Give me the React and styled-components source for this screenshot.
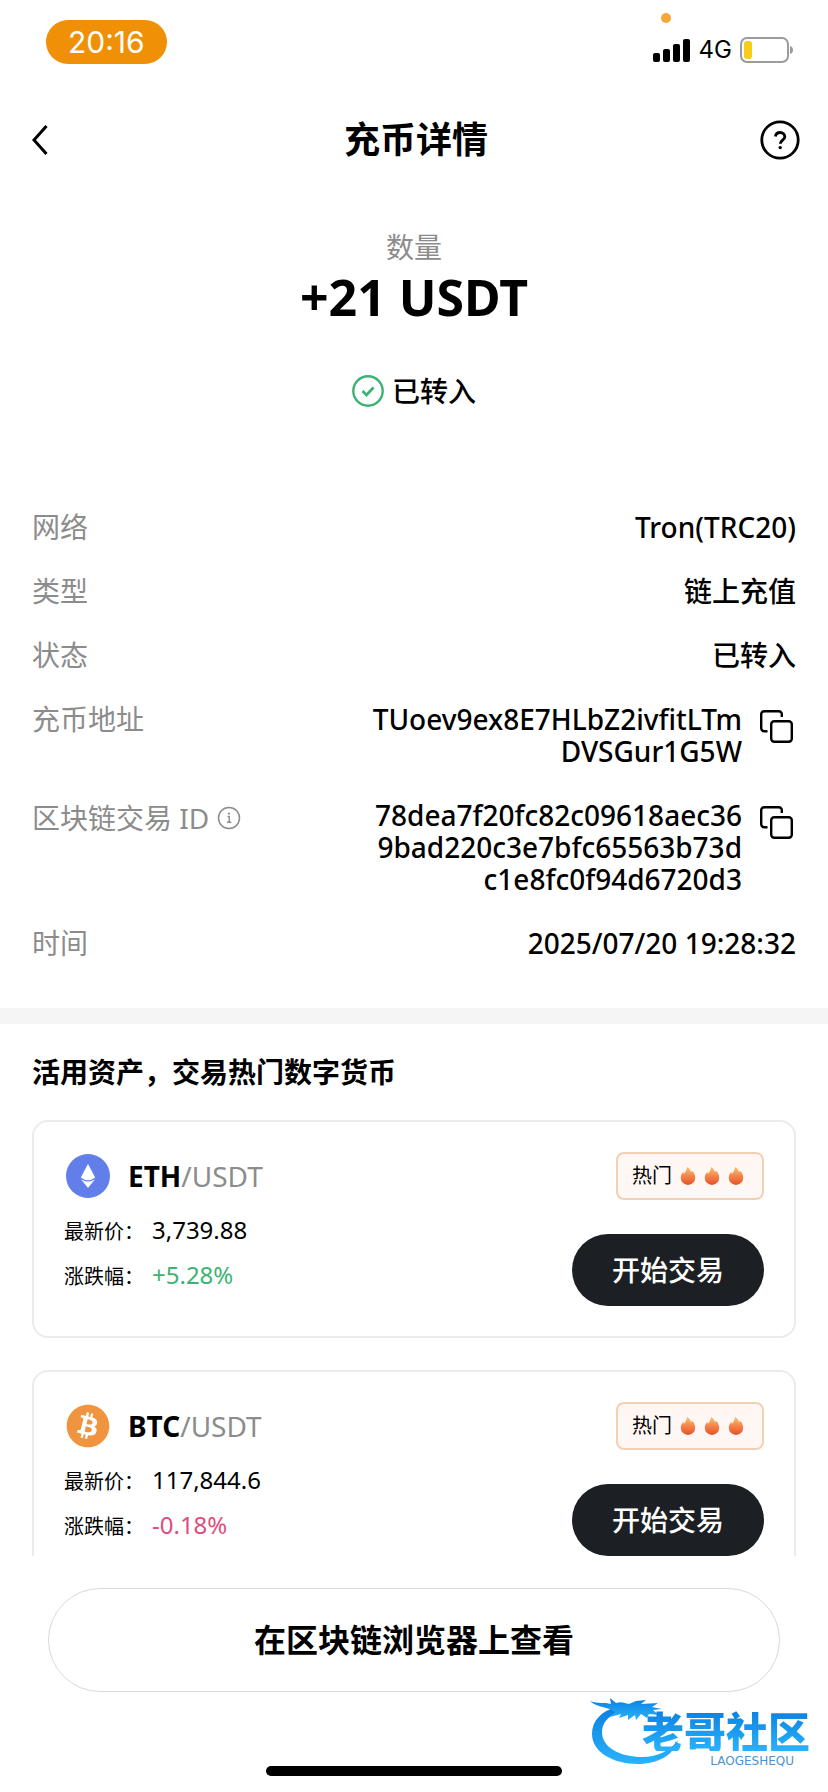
import styled, { createGlobalStyle } from "styled-components";
import { FaBitcoin } from "react-icons/fa";

const details = [
  { label: "网络", value: "Tron(TRC20)" },
  { label: "类型", value: "链上充值" },
  { label: "状态", value: "已转入" },
  {
    label: "充币地址",
    value: "TUoev9ex8E7HLbZ2ivfitLTmDVSGur1G5W",
    copyable: true,
  },
  {
    label: "区块链交易 ID",
    value: "78dea7f20fc82c09618aec369bad220c3e7bfc65563b73dc1e8fc0f94d6720d3",
    copyable: true,
    info: true,
  },
  { label: "时间", value: "2025/07/20 19:28:32" },
];

const markets = [
  { base: "ETH", quote: "USDT", price: "3,739.88", change: "+5.28%", icon: EthIcon },
  { base: "BTC", quote: "USDT", price: "117,844.6", change: "-0.18%", icon: BtcIcon },
];

export default function App() {
  return (
    <Page>
      <GlobalStyle />
      <StatusBar>
        <Clock>20:16</Clock>
        <StatusIcons>
          <RecordingDot />
          <SignalIcon />
          <Carrier>4G</Carrier>
          <BatteryIcon />
        </StatusIcons>
      </StatusBar>
      <Header>
        <IconButton type="button" aria-label="返回">
          <BackIcon />
        </IconButton>
        <Title>充币详情</Title>
        <IconButton type="button" aria-label="帮助">
          <HelpIcon />
        </IconButton>
      </Header>
      <Content>
        <Summary>
          <SummaryLabel>数量</SummaryLabel>
          <Amount>+21 USDT</Amount>
          <Status>
            <CheckIcon />
            已转入
          </Status>
        </Summary>
        <DetailList>
          {details.map((detail) => (
            <DetailRow key={detail.label}>
              <DetailLabel>
                {detail.label}
                {detail.info && (
                  <InfoButton type="button" aria-label="说明">
                    <InfoIcon />
                  </InfoButton>
                )}
              </DetailLabel>
              <DetailValue>
                <DetailText>{detail.value}</DetailText>
                {detail.copyable && (
                  <CopyButton type="button" aria-label="复制">
                    <CopyIcon />
                  </CopyButton>
                )}
              </DetailValue>
            </DetailRow>
          ))}
        </DetailList>
        <Markets>
          <MarketsTitle>活用资产，交易热门数字货币</MarketsTitle>
          {markets.map((market) => (
            <MarketCard key={market.base} {...market} />
          ))}
        </Markets>
      </Content>
      <Footer>
        <ExplorerButton type="button">在区块链浏览器上查看</ExplorerButton>
        <Brand>
          <DragonIcon />
          <BrandName>老哥社区</BrandName>
          <BrandLatin>LAOGESHEQU</BrandLatin>
        </Brand>
        <HomeIndicator />
      </Footer>
    </Page>
  );
}

function MarketCard({ base, quote, price, change, icon: Icon }) {
  return (
    <Card>
      <CardHead>
        <Icon />
        <Pair>
          <strong>{base}</strong>/{quote}
        </Pair>
        <HotBadge>
          热门
          <Flames>
            <FlameIcon />
            <FlameIcon />
            <FlameIcon />
          </Flames>
        </HotBadge>
      </CardHead>
      <CardBody>
        <Stats>
          <Stat>
            <StatLabel>最新价：</StatLabel>
            <StatValue>{price}</StatValue>
          </Stat>
          <Stat>
            <StatLabel>涨跌幅：</StatLabel>
            <StatValue $tone={change.startsWith("+") ? "up" : "down"}>
              {change}
            </StatValue>
          </Stat>
        </Stats>
        <TradeButton type="button">开始交易</TradeButton>
      </CardBody>
    </Card>
  );
}

function SignalIcon() {
  return (
    <svg width="38" height="24" viewBox="0 0 38 24" aria-hidden="true">
      <rect x="0" y="15" width="7" height="9" rx="2" />
      <rect x="10" y="11" width="7" height="13" rx="2" />
      <rect x="20" y="6" width="7" height="18" rx="2" />
      <rect x="30" y="1" width="7" height="23" rx="2" />
    </svg>
  );
}

function BatteryIcon() {
  return (
    <svg width="54" height="26" viewBox="0 0 54 26" aria-hidden="true">
      <rect x="1" y="1" width="47" height="24" rx="6" fill="none" stroke="#9b9b9b" strokeWidth="2" />
      <rect x="4" y="4" width="8" height="18" rx="3" fill="#f5cd1a" />
      <path d="M50 9c4 1 4 7 0 8z" fill="#9b9b9b" />
    </svg>
  );
}

function BackIcon() {
  return (
    <svg width="40" height="40" viewBox="0 0 40 40" aria-hidden="true">
      <path d="M14.5 6 2 20l12.5 14" fill="none" stroke="#000" strokeWidth="3" />
    </svg>
  );
}

function HelpIcon() {
  return (
    <svg width="40" height="40" viewBox="0 0 40 40" fill="none" stroke="#000" aria-hidden="true">
      <circle cx="20" cy="20" r="18.2" strokeWidth="2.8" />
      <path
        d="M15.4 16.4c.4-2.3 2.3-3.9 4.7-3.9 2.7 0 4.7 1.9 4.7 4.3 0 3.2-4.5 3.5-4.5 7"
        strokeWidth="2.8"
      />
      <circle cx="20.2" cy="27.6" r="1.7" fill="#000" stroke="none" />
    </svg>
  );
}

function CheckIcon() {
  return (
    <svg width="32" height="32" viewBox="0 0 32 32" fill="none" stroke="#3cb371" aria-hidden="true">
      <circle cx="16" cy="16" r="14.7" strokeWidth="2.4" />
      <path d="m10.5 16 4 4 7-7.5" strokeWidth="2.8" />
    </svg>
  );
}

function InfoIcon() {
  return (
    <svg width="24" height="24" viewBox="0 0 24 24" fill="none" stroke="#8c8c8c" aria-hidden="true">
      <circle cx="12" cy="12" r="10.5" strokeWidth="1.5" />
      <path d="M10.5 10.5h1.7v5.5M10 16.3h4.3" strokeWidth="1.4" />
      <circle cx="12" cy="7.6" r="1.1" fill="#8c8c8c" stroke="none" />
    </svg>
  );
}

function CopyIcon() {
  return (
    <svg width="40" height="40" viewBox="0 0 40 40" fill="none" stroke="#000" strokeWidth="2.4" aria-hidden="true">
      <rect x="15.2" y="15.2" width="20.6" height="20.6" rx="3" />
      <path d="M11.5 25.2H8.2a3 3 0 0 1-3-3V8.2a3 3 0 0 1 3-3h14.600a3 3 0 0 1 3 3v2.8" />
    </svg>
  );
}

function EthIcon() {
  return (
    <svg width="48" height="48" viewBox="0 0 48 48" aria-hidden="true">
      <circle cx="24" cy="24" r="22" fill="#627eea" />
      <path d="m24 12 7.2 13.5q-7.2 5.5-14.4 0z" fill="#fff" />
      <path d="M17 27.2q7 4.8 14 0l-7 8.8z" fill="#fff" />
    </svg>
  );
}

function BtcIcon() {
  return (
    <CoinFrame>
      <FaBitcoin size={44} aria-hidden="true" />
    </CoinFrame>
  );
}

function FlameIcon() {
  return (
    <svg width="24" height="24" viewBox="0 0 24 24" aria-hidden="true">
      <defs>
        <linearGradient id="flame" x1="0" y1="0" x2="0" y2="1">
          <stop offset="0" stopColor="#f9c56c" />
          <stop offset="0.45" stopColor="#f58a4e" />
          <stop offset="1" stopColor="#e5502a" />
        </linearGradient>
      </defs>
      <path
        d="M11 3c3 1.5 3.5 3.5 4.2 5.3.4-.6.6-1.1.6-1.8 2.2 2 3.4 4.6 3.4 7.2A7.2 7.2 0 0 1 12 21a7.2 7.2 0 0 1-7.2-7.3c0-2.7 1.2-4.2 2.8-5.6 0 .8.2 1.3.6 1.7C9.2 7.8 11 5.8 11 3z"
        fill="url(#flame)"
      />
    </svg>
  );
}

function DragonIcon() {
  return (
    <svg width="96" height="72" viewBox="0 0 96 72" aria-hidden="true">
      <defs>
        <linearGradient id="dragon" x1="0" y1="0" x2="0" y2="1">
          <stop offset="0" stopColor="#0b7fe0" />
          <stop offset="1" stopColor="#29b3fb" />
        </linearGradient>
      </defs>
      <g fill="url(#dragon)">
        <path d="M27 10C11 14 2 24 2 37c0 18 21 30 46 30 20 0 36-9 40-24-8 11-21 17-36 17-21 0-40-9-40-25 0-9 6-16 17-20z" />
        <path d="M0 4c8 3 14 1 21 3l-1-6 6 5c5-2 9 0 13 1l7-3 10-1-5 4 17-1-6 4 10 2-9 1 6 5-10-1-2 4-6-4-5 6-1-5-7 5v-5l-9 3 2-4-11 3 5-5C17 9 7 11 0 4z" />
      </g>
    </svg>
  );
}

const GlobalStyle = createGlobalStyle`
  * {
    box-sizing: border-box;
  }
  body {
    margin: 0;
    background: #fff;
    color: #000;
    font-family: "Noto Sans", "Noto Sans CJK SC", sans-serif;
    font-size: 28px;
    line-height: 32px;
  }
  button {
    border: 0;
    padding: 0;
    background: none;
    color: inherit;
    font: inherit;
  }
  svg {
    display: block;
    flex: none;
  }
`;

const Page = styled.div`
  display: flex;
  flex-direction: column;
  height: 100vh;
`;

const StatusBar = styled.div`
  display: flex;
  justify-content: space-between;
  align-items: flex-start;
  padding: 20px 34px 16px 46px;
`;

const Clock = styled.div`
  padding: 0 22px;
  border-radius: 22px;
  background: #f09006;
  color: #fff;
  font-family: Inter, sans-serif;
  font-size: 30px;
  line-height: 44px;
`;

const StatusIcons = styled.div`
  position: relative;
  display: flex;
  align-items: center;
  gap: 8px;
  padding-top: 14px;
`;

const RecordingDot = styled.span`
  position: absolute;
  top: -7px;
  left: 8px;
  width: 10px;
  height: 10px;
  border-radius: 50%;
  background: #f5a836;
`;

const Carrier = styled.span`
  font-family: Inter, sans-serif;
  font-size: 24px;
`;

const Header = styled.header`
  display: flex;
  align-items: center;
  justify-content: space-between;
  padding: 38px 28px 16px 32px;
`;

const IconButton = styled.button`
  width: 40px;
  height: 40px;
`;

const Title = styled.h1`
  margin: 0;
  font-size: 36px;
  font-weight: 600;
  line-height: 40px;
`;

const Content = styled.main`
  flex: 1;
  min-height: 0;
  overflow-y: auto;
  scrollbar-width: none;
`;

const Summary = styled.section`
  display: flex;
  flex-direction: column;
  align-items: center;
  padding: 55px 32px 104px;
`;

const SummaryLabel = styled.span`
  color: #8c8c8c;
`;

const Amount = styled.strong`
  padding: 2px 0 46px;
  font-size: 50px;
  font-weight: 700;
  line-height: 64px;
`;

const Status = styled.div`
  display: flex;
  align-items: center;
  gap: 8px;
  font-weight: 500;
`;

const DetailList = styled.dl`
  display: flex;
  flex-direction: column;
  gap: 32px;
  margin: 0;
  padding: 0 32px 49px;
`;

const DetailRow = styled.div`
  display: flex;
  align-items: flex-start;
  justify-content: space-between;
`;

const DetailLabel = styled.dt`
  display: flex;
  align-items: center;
  color: #8c8c8c;
`;

const InfoButton = styled.button`
  padding: 7px 8px;
`;

const DetailValue = styled.dd`
  display: flex;
  align-items: flex-start;
  gap: 14px;
  margin: 0;
  font-weight: 500;
  text-align: right;
`;

const DetailText = styled.span`
  max-width: 374px;
  word-break: break-all;
`;

const CopyButton = styled.button`
  padding-top: 3px;
`;

const Markets = styled.section`
  display: flex;
  flex-direction: column;
  gap: 32px;
  padding: 32px;
  border-top: 16px solid #f5f5f5;
`;

const MarketsTitle = styled.h2`
  margin: 0;
  font-size: 28px;
  font-weight: 600;
  line-height: 32px;
`;

const Card = styled.article`
  padding: 30px;
  border: 2px solid #ebebeb;
  border-radius: 16px;
`;

const CardHead = styled.div`
  display: flex;
  align-items: center;
`;

const CoinFrame = styled.span`
  padding: 2px;
  color: #f09440;
`;

const Pair = styled.span`
  flex: 1;
  padding-left: 16px;
  color: #8c8c8c;

  strong {
    color: #000;
  }
`;

const HotBadge = styled.span`
  display: flex;
  align-items: center;
  gap: 4px;
  padding: 0 14px;
  border: 2px solid #f3d0b4;
  border-radius: 8px;
  background: #fff7f3;
  font-size: 20px;
  line-height: 44px;
`;

const Flames = styled.span`
  display: flex;
`;

const CardBody = styled.div`
  display: flex;
  align-items: flex-end;
  justify-content: space-between;
  padding-top: 16px;
`;

const Stats = styled.div`
  display: flex;
  flex-direction: column;
  gap: 15px;
  padding-bottom: 15px;
`;

const Stat = styled.div`
  display: flex;
  align-items: baseline;
  gap: 8px;
  line-height: 28px;
`;

const StatLabel = styled.span`
  font-size: 20px;
`;

const tones = { up: "#3cb371", down: "#dc4d7d" };

const StatValue = styled.span`
  color: ${({ $tone }) => tones[$tone] || "#000"};
  font-size: 24px;
`;

const TradeButton = styled.button`
  width: 192px;
  height: 72px;
  border-radius: 36px;
  background: #1c1f23;
  color: #fff;
  font-weight: 500;
`;

const Footer = styled.footer`
  position: relative;
  display: flex;
  flex-direction: column;
  align-items: center;
  gap: 74px;
  padding: 32px 48px 16px;
`;

const ExplorerButton = styled.button`
  width: 100%;
  height: 104px;
  border: 1px solid #d9d9d9;
  border-radius: 52px;
  font-size: 32px;
  font-weight: 600;
`;

const Brand = styled.div`
  position: absolute;
  right: 18px;
  bottom: 23px;
  width: 220px;
  height: 72px;
`;

const BrandName = styled.span`
  position: absolute;
  right: 0;
  top: 12px;
  background: linear-gradient(#0b7fe0, #29b3fb);
  background-clip: text;
  color: transparent;
  font-family: "Noto Sans CJK SC", sans-serif;
  font-size: 42px;
  font-weight: 900;
  line-height: 42px;
`;

const BrandLatin = styled.span`
  position: absolute;
  right: 16px;
  top: 58px;
  color: #4c93cf;
  font-family: "DejaVu Sans", sans-serif;
  font-size: 12px;
  line-height: 12px;
`;

const HomeIndicator = styled.div`
  width: 296px;
  height: 10px;
  border-radius: 5px;
  background: #000;
`;
